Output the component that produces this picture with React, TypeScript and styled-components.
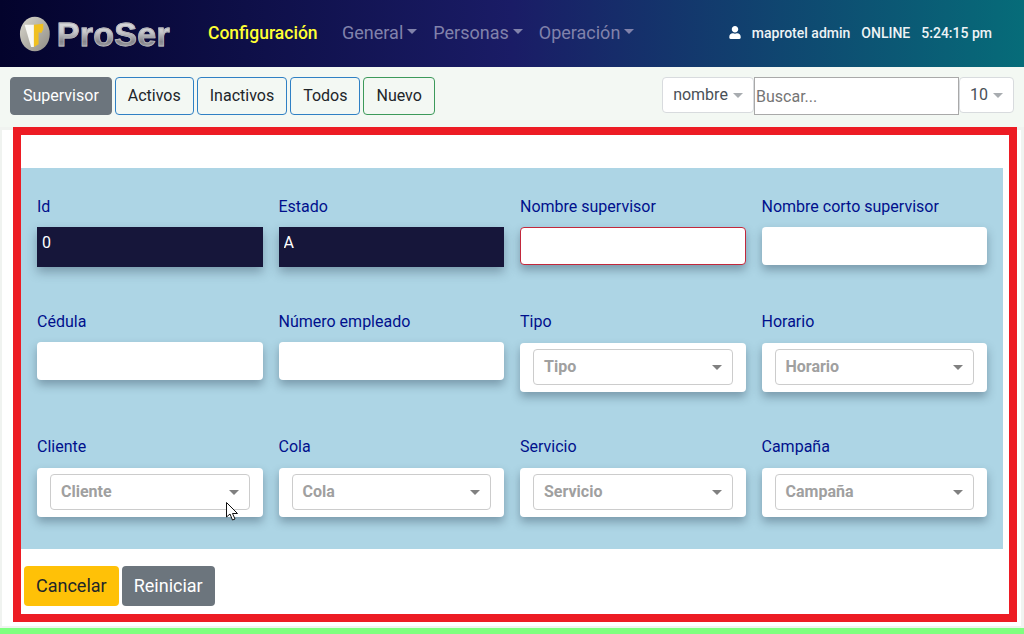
import React from "react";
import styled, { createGlobalStyle } from "styled-components";
import { FaUser } from "react-icons/fa";

const Global = createGlobalStyle`
  html, body { margin: 0; padding: 0; height: 100%; background: #7fff7f; overflow: hidden; }
  body { font-family: Roboto, "Liberation Sans", sans-serif; }
  * { box-sizing: border-box; }
`;

const Page = styled.div`
  width: 1024px;
  height: 634px;
  display: flex;
  flex-direction: column;
  background: #7fff7f;
`;

const Header = styled.header`
  height: 67px;
  flex: none;
  display: flex;
  align-items: center;
  padding: 0 32px 2px 19px;
  background: linear-gradient(to right, #03032c 0%, #1a1c66 50%, #066c79 100%);
`;

const Brand = styled.div`
  width: 151px;
  display: flex;
  align-items: center;
  gap: 6px;
  margin-top: 2px;
  margin-right: 38px;
`;

const BrandText = styled.span`
  font-family: "Liberation Sans", Arial, sans-serif;
  font-size: 34px;
  font-weight: 700;
  line-height: 38px;
  letter-spacing: 0.3px;
  -webkit-text-stroke: 0.8px #b4b4b8;
  background: linear-gradient(to bottom, #e8e8ea 0%, #c8c8cc 45%, #85858b 70%, #b8b8bc 100%);
  -webkit-background-clip: text;
  background-clip: text;
  color: transparent;
`;

const Nav = styled.nav`
  display: flex;
  align-items: center;
  gap: 16px;
  flex: 1;
`;

const NavItem = styled.span<{ $active?: boolean }>`
  font-size: ${(p) => (p.$active ? "17.5px" : "18px")};
  font-weight: ${(p) => (p.$active ? 500 : 400)};
  line-height: 24px;
  color: ${(p) => (p.$active ? "#ffff33" : "#8182ab")};
  display: inline-flex;
  align-items: center;
  margin-right: ${(p) => (p.$active ? "8.5px" : "0")};
`;

const NavCaret = styled.i`
  display: inline-block;
  width: 0;
  height: 0;
  margin-left: 4px;
  margin-top: -2px;
  border-top: 5px solid currentColor;
  border-left: 5px solid transparent;
  border-right: 5px solid transparent;
`;

const Status = styled.div`
  display: flex;
  align-items: center;
  font-size: 14px;
  font-weight: 500;
  color: #eef3f6;
  gap: 11px;
`;

const UserIcon = styled(FaUser)`
  width: 12px;
  height: 13px;
  color: #fff;
`;

const Toolbar = styled.div`
  height: 60px;
  flex: none;
  display: flex;
  align-items: flex-start;
  justify-content: space-between;
  padding: 10px 10px 0;
  background: #f3f8f3;
`;

const ButtonRow = styled.div`
  display: flex;
  gap: 3px;
`;

const ToolButton = styled.button<{ $tone: "dark" | "blue" | "green" }>`
  height: 38px;
  padding: 0 12px;
  font: 400 16px/24px Roboto, sans-serif;
  border-radius: 4px;
  border: 1px solid
    ${(p) => (p.$tone === "dark" ? "#6c757d" : p.$tone === "blue" ? "#2f80c4" : "#3c9a5a")};
  background: ${(p) => (p.$tone === "dark" ? "#6c757d" : "transparent")};
  color: ${(p) => (p.$tone === "dark" ? "#fff" : "#212529")};
`;

const SearchGroup = styled.div`
  display: flex;
  align-items: flex-start;
`;

const Dropdown = styled.div<{ $w: number }>`
  width: ${(p) => p.$w}px;
  height: 36px;
  display: flex;
  align-items: center;
  justify-content: center;
  gap: 5px;
  padding-bottom: 2px;
  font-size: 16px;
  color: #495057;
  background: #fff;
  border: 1px solid #d8dbde;
  border-radius: 4px;
`;

const SmallCaret = styled.i`
  width: 0;
  height: 0;
  margin-top: 2px;
  border-top: 5px solid #a8acb0;
  border-left: 5px solid transparent;
  border-right: 5px solid transparent;
`;

const SearchInput = styled.input`
  width: 205px;
  height: 38px;
  padding: 0 1px;
  font: 400 16px Roboto, sans-serif;
  border: 1px solid #a9a9a9;
  background: #fff;
  outline: none;
  &::placeholder { color: #757575; opacity: 1; }
`;

const Panel = styled.main`
  flex: none;
  height: 501px;
  padding: 0 4px 0 11px;
  background: #fff;
  border-style: solid;
  border-color: #f0f3f0;
  border-width: 3px 3px 2px 2px;
`;

const Frame = styled.section`
  height: 495px;
  margin-top: -3px;
  border: 8px solid #ed1c24;
  background: #fff;
  display: flex;
  flex-direction: column;
  padding-top: 33px;
`;

const FormArea = styled.div`
  width: 982px;
  height: 381px;
  padding: 27px 16px 0;
  background: #add5e5;
  display: grid;
  grid-template-columns: repeat(4, 1fr);
  grid-template-rows: 73px 83px 83px;
  column-gap: 16px;
  row-gap: 42px;
`;

const Field = styled.div`
  display: flex;
  flex-direction: column;
  align-items: stretch;
`;

const Label = styled.label`
  font-size: 16px;
  line-height: 24px;
  color: #00108c;
  margin-bottom: 8px;
`;

const TextBox = styled.input<{ $variant?: "dark" | "error" }>`
  width: 100%;
  height: ${(p) => (p.$variant === "dark" ? "40px" : "38px")};
  padding: 0 5px ${(p) => (p.$variant === "dark" ? "10px" : "0")};
  font: 400 16px Roboto, sans-serif;
  color: ${(p) => (p.$variant === "dark" ? "#fff" : "#212529")};
  background: ${(p) => (p.$variant === "dark" ? "#16163a" : "#fff")};
  border: ${(p) => (p.$variant === "error" ? "1px solid #c2283c" : "none")};
  border-radius: ${(p) => (p.$variant === "dark" ? "0" : "4px")};
  box-shadow: 0 5px 10px rgba(30, 50, 70, 0.36);
  outline: none;
`;

const SelectCard = styled.div`
  height: 49px;
  margin-top: 1px;
  padding: 6px 13px;
  background: #fff;
  border-radius: 4px;
  box-shadow: 0 5px 10px rgba(30, 50, 70, 0.36);
`;

const SelectBox = styled.div`
  height: 36px;
  padding: 0 10px 2px;
  display: flex;
  align-items: center;
  justify-content: space-between;
  font-size: 16px;
  font-weight: 700;
  color: #a0a0a0;
  border: 1px solid #cccccc;
  border-radius: 4px;
`;

const SelectCaret = styled.i`
  width: 0;
  height: 0;
  margin-top: 2px;
  border-top: 5px solid #808080;
  border-left: 5px solid transparent;
  border-right: 5px solid transparent;
`;

const Actions = styled.div`
  display: flex;
  gap: 3px;
  padding: 17px 0 0 3px;
`;

const ActionButton = styled.button<{ $tone: "warn" | "muted" }>`
  height: 40px;
  padding: 0 12px;
  font: 400 18px/24px Roboto, sans-serif;
  border: none;
  border-radius: 4px;
  background: ${(p) => (p.$tone === "warn" ? "#ffc107" : "#6c757d")};
  color: ${(p) => (p.$tone === "warn" ? "#212529" : "#fff")};
`;

const Cursor = styled.svg`
  position: absolute;
  left: 226px;
  top: 502px;
  width: 13px;
  height: 19px;
`;

const Logo = () => (
  <svg width="33" height="38" viewBox="0 0 34 38">
    <defs>
      <linearGradient id="disc" x1="0" y1="0" x2="1" y2="1">
        <stop offset="0" stopColor="#d8d6cc" />
        <stop offset="1" stopColor="#8f8c84" />
      </linearGradient>
    </defs>
    <ellipse cx="17" cy="19" rx="16" ry="18.5" fill="url(#disc)" />
    <path d="M6 9 L16 9 L16 33 L13 33 Z" fill="#f8f8f4" />
    <path d="M16 9 L26 8 L26 14 L24 18 L21 17 L21 30 L16 33 Z" fill="#f0c020" />
  </svg>
);

const Select = ({ text }: { text: string }) => (
  <SelectCard>
    <SelectBox>
      {text}
      <SelectCaret />
    </SelectBox>
  </SelectCard>
);

export default function App() {
  return (
    <Page>
      <Global />
      <Header>
        <Brand>
          <Logo />
          <BrandText>ProSer</BrandText>
        </Brand>
        <Nav>
          <NavItem $active>Configuración</NavItem>
          <NavItem>General<NavCaret /></NavItem>
          <NavItem>Personas<NavCaret /></NavItem>
          <NavItem>Operación<NavCaret /></NavItem>
        </Nav>
        <Status>
          <UserIcon />
          <span>maprotel admin</span>
          <span>ONLINE</span>
          <span>5:24:15 pm</span>
        </Status>
      </Header>
      <Toolbar>
        <ButtonRow>
          <ToolButton $tone="dark">Supervisor</ToolButton>
          <ToolButton $tone="blue">Activos</ToolButton>
          <ToolButton $tone="blue">Inactivos</ToolButton>
          <ToolButton $tone="blue">Todos</ToolButton>
          <ToolButton $tone="green">Nuevo</ToolButton>
        </ButtonRow>
        <SearchGroup>
          <Dropdown $w={92}>nombre<SmallCaret /></Dropdown>
          <SearchInput placeholder="Buscar..." />
          <Dropdown $w={55}>10<SmallCaret /></Dropdown>
        </SearchGroup>
      </Toolbar>
      <Panel>
        <Frame>
          <FormArea>
            <Field><Label>Id</Label><TextBox $variant="dark" value="0" readOnly /></Field>
            <Field><Label>Estado</Label><TextBox $variant="dark" value="A" readOnly /></Field>
            <Field><Label>Nombre supervisor</Label><TextBox $variant="error" /></Field>
            <Field><Label>Nombre corto supervisor</Label><TextBox /></Field>
            <Field><Label>Cédula</Label><TextBox /></Field>
            <Field><Label>Número empleado</Label><TextBox /></Field>
            <Field><Label>Tipo</Label><Select text="Tipo" /></Field>
            <Field><Label>Horario</Label><Select text="Horario" /></Field>
            <Field><Label>Cliente</Label><Select text="Cliente" /></Field>
            <Field><Label>Cola</Label><Select text="Cola" /></Field>
            <Field><Label>Servicio</Label><Select text="Servicio" /></Field>
            <Field><Label>Campaña</Label><Select text="Campaña" /></Field>
          </FormArea>
          <Actions>
            <ActionButton $tone="warn">Cancelar</ActionButton>
            <ActionButton $tone="muted">Reiniciar</ActionButton>
          </Actions>
        </Frame>
      </Panel>
      <Cursor viewBox="0 0 13 19">
        <path d="M0.5 0.5 L0.5 15 L4 12 L6.5 18 L9 17 L6.5 11.5 L11.5 11.5 Z" fill="#fff" stroke="#111" strokeWidth="1" />
      </Cursor>
    </Page>
  );
}
